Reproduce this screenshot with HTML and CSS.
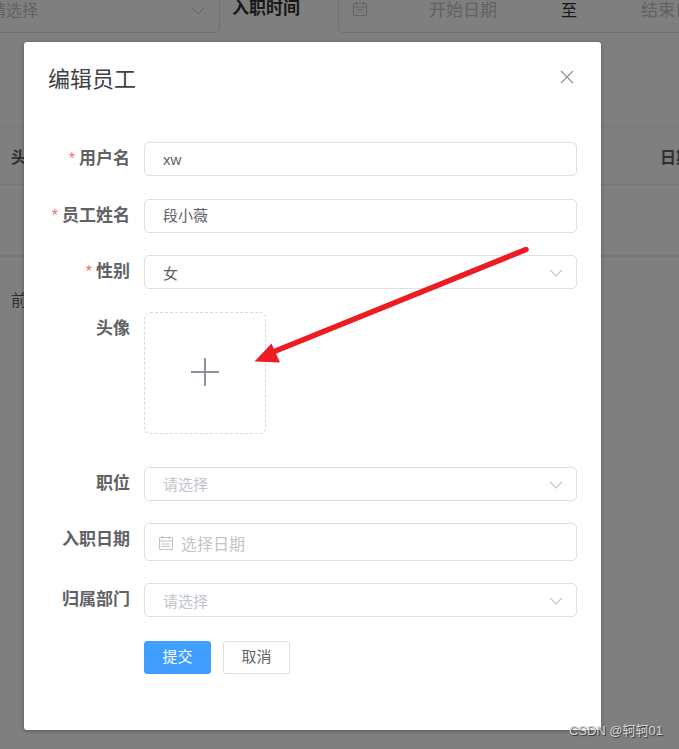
FILE: index.html
```html
<!DOCTYPE html>
<html lang="zh-CN">
<head>
  <meta charset="UTF-8">
  <title>编辑员工</title>
  <link rel="stylesheet" href="styles.css">
</head>
<body>
  <div class="page">
    <div class="filter-row">
      <div class="filter-select">
        <span class="filter-placeholder">请选择</span>
        <svg class="filter-chevron" width="14" height="8" viewBox="0 0 14 8"><path d="M1 1l6 6 6-6" fill="none" stroke="#c0c4cc" stroke-width="1"/></svg>
      </div>
      <div class="filter-label">入职时间</div>
      <div class="filter-range">
        <svg class="range-icon" width="16" height="16" viewBox="0 0 16 16"><path d="M1.5 2.5h13v12h-13zM1.5 6h13M4.5 1v3M11.5 1v3M4 8.5h2M7 8.5h2M10 8.5h2M4 11h2M7 11h2M10 11h2" fill="none" stroke="#c0c4cc" stroke-width="1"/></svg>
        <span class="range-start">开始日期</span>
        <span class="range-sep">至</span>
        <span class="range-end">结束日期</span>
      </div>
    </div>
    <div class="table-head">
      <span>头像</span>
      <span class="last-col">日期</span>
    </div>
    <div class="table-row"></div>
    <div class="page-note">前</div>
  </div>

  <div class="overlay"></div>

  <div class="dialog">
    <div class="dialog-head">
      <h2>编辑员工</h2>
      <svg class="close-icon" width="14" height="14" viewBox="0 0 14 14"><path d="M1 1l12 12M13 1L1 13" fill="none" stroke="#909399" stroke-width="1.3"/></svg>
    </div>
    <form class="form">
      <div class="form-row">
        <label class="required">用户名</label>
        <div class="field">xw</div>
      </div>
      <div class="form-row">
        <label class="required">员工姓名</label>
        <div class="field field-name">段小薇</div>
      </div>
      <div class="form-row">
        <label class="required">性别</label>
        <div class="field select">女
          <svg width="14" height="8" viewBox="0 0 14 8"><path d="M1 1l6 6 6-6" fill="none" stroke="#c0c4cc" stroke-width="1.1"/></svg>
        </div>
      </div>
      <div class="form-row upload-row">
        <label>头像</label>
        <div class="upload">
          <svg width="28" height="28" viewBox="0 0 28 28"><path d="M14 0v28M0 14h28" fill="none" stroke="#8c939d" stroke-width="2"/></svg>
        </div>
      </div>
      <div class="form-row">
        <label>职位</label>
        <div class="field select placeholder">请选择
          <svg width="14" height="8" viewBox="0 0 14 8"><path d="M1 1l6 6 6-6" fill="none" stroke="#c0c4cc" stroke-width="1.1"/></svg>
        </div>
      </div>
      <div class="form-row date-row">
        <label>入职日期</label>
        <div class="field date placeholder">
          <svg width="14" height="14" viewBox="0 0 14 14"><path d="M.5 1.5h13v12H.5zM.5 5h13M3.5 0v3M10.5 0v3M3 8h8M3 10.5h8" fill="none" stroke="#c0c4cc" stroke-width="1"/></svg>
          选择日期
        </div>
      </div>
      <div class="form-row">
        <label>归属部门</label>
        <div class="field select placeholder">请选择
          <svg width="14" height="8" viewBox="0 0 14 8"><path d="M1 1l6 6 6-6" fill="none" stroke="#c0c4cc" stroke-width="1.1"/></svg>
        </div>
      </div>
      <div class="form-actions">
        <button type="button" class="btn btn-primary">提交</button>
        <button type="button" class="btn">取消</button>
      </div>
    </form>
  </div>

  <svg class="arrow" width="679" height="749" viewBox="0 0 679 749">
    <path d="M526 249.5L268 354" fill="none" stroke="#ed1c24" stroke-width="5.5" stroke-linecap="round"/>
    <path d="M254.5 361.5L271.5 343.5L280 362.5z" fill="#ed1c24"/>
  </svg>

  <div class="watermark">CSDN @轲轲01</div>
</body>
</html>
```

FILE: styles.css
```css
html, body {
  margin: 0;
  padding: 0;
  height: 100%;
  overflow: hidden;
}

body {
  position: relative;
  width: 679px;
  height: 749px;
  font-family: "Liberation Sans", "Noto Sans CJK SC", sans-serif;
  background-color: #fff;
  color: #606266;
}

/* page behind the mask */
.page {
  margin-top: -15px;
}

.filter-row {
  display: flex;
  align-items: flex-start;
  height: 48px;
}

.filter-select {
  position: relative;
  box-sizing: border-box;
  flex: none;
  width: 240px;
  height: 48px;
  margin-left: -20px;
  padding-top: 14px;
  border: 1px solid #dcdfe6;
  border-radius: 5px;
  font-size: 16px;
  line-height: 22px;
  color: #c0c4cc;
}

.filter-placeholder {
  margin-left: 9px;
}

.filter-chevron {
  position: absolute;
  right: 14px;
  top: 21px;
}

.filter-label {
  flex: none;
  width: 106px;
  margin-left: 12px;
  padding-top: 13px;
  font-size: 17px;
  line-height: 22px;
  font-weight: bold;
  color: #303133;
}

.filter-range {
  display: flex;
  flex: none;
  box-sizing: border-box;
  width: 420px;
  height: 48px;
  padding-top: 14px;
  padding-left: 13px;
  border: 1px solid #dcdfe6;
  border-radius: 5px;
  font-size: 17px;
  line-height: 22px;
  color: #c0c4cc;
  white-space: nowrap;
}

.range-icon {
  flex: none;
  margin-top: 1px;
}

.range-start {
  margin-left: 61px;
}

.range-sep {
  margin-left: 64px;
  color: #303133;
  font-size: 16px;
}

.range-end {
  margin-left: 64px;
}

.table-head {
  display: flex;
  justify-content: space-between;
  align-items: center;
  box-sizing: border-box;
  height: 59px;
  margin-top: 93px;
  padding-left: 11px;
  border-top: 1px solid #ebeef5;
  border-bottom: 1px solid #ebeef5;
  font-size: 16px;
  font-weight: bold;
  color: #606266;
}

.last-col {
  width: 19px;
  white-space: nowrap;
}

.table-row {
  height: 70px;
  border-bottom: 2px solid #ebeef5;
}

.page-note {
  margin-top: 33px;
  padding-left: 11px;
  font-size: 16px;
  line-height: 22px;
}

.overlay {
  position: absolute;
  left: 0;
  top: 0;
  width: 100%;
  height: 100%;
  background-color: rgba(0, 0, 0, 0.5);
}

/* dialog */
.dialog {
  position: absolute;
  left: 24px;
  top: 42px;
  box-sizing: border-box;
  width: 577px;
  height: 688px;
  background-color: #fff;
  border-radius: 3px;
  box-shadow: 0 1px 4px rgba(0, 0, 0, 0.3);
}

.dialog-head {
  display: flex;
  justify-content: space-between;
  align-items: center;
  height: 76px;
  padding: 0 27px 0 24px;
}

.dialog-head h2 {
  margin: 0;
  font-size: 22px;
  line-height: 72px;
  font-weight: 400;
  color: #3f4144;
}

.close-icon {
  margin-top: -6px;
}

.form {
  padding: 24px 24px 0 0;
}

.form-row {
  display: flex;
  height: 34px;
  margin-bottom: 22.5px;
}

.form-row label {
  box-sizing: border-box;
  flex: none;
  width: 120px;
  padding-right: 14px;
  text-align: right;
  font-size: 17px;
  line-height: 34px;
  font-weight: bold;
  color: #606266;
}

.required::before {
  content: "*";
  margin-right: 4px;
  font-size: 16px;
  color: #f56c6c;
  font-weight: normal;
}

.field {
  position: relative;
  display: flex;
  align-items: center;
  box-sizing: border-box;
  flex: 1;
  padding-left: 18px;
  border: 1px solid #dcdfe6;
  border-radius: 5px;
  font-size: 15px;
  color: #606266;
}

.field-name {
  padding-bottom: 2px;
}

.field.select svg {
  position: absolute;
  right: 13px;
  top: 13px;
}

.field.placeholder {
  color: #c0c4cc;
}

.upload-row {
  height: 122px;
  margin-bottom: 33px;
}

.upload {
  display: flex;
  align-items: center;
  justify-content: center;
  box-sizing: border-box;
  width: 122px;
  height: 122px;
  padding-bottom: 1px;
  border: 1px dashed #d9d9d9;
  border-radius: 6px;
}

.date-row {
  height: 38px;
  margin-bottom: 22px;
}

.date-row label {
  line-height: 33px;
}

.field.date {
  padding-left: 14px;
  padding-top: 1px;
  font-size: 16px;
}

.field.date svg {
  margin-right: 8px;
}

.form-actions {
  display: flex;
  gap: 12px;
  margin-left: 120px;
  padding-top: 1px;
}

.btn {
  box-sizing: border-box;
  width: 67px;
  height: 33px;
  padding: 0 0 3px;
  border: 1px solid #dcdfe6;
  border-radius: 3px;
  background-color: #fff;
  font-family: inherit;
  font-size: 15px;
  color: #606266;
}

.btn-primary {
  border-color: #409eff;
  background-color: #409eff;
  color: #fff;
}

.arrow {
  position: absolute;
  left: 0;
  top: 0;
}

.watermark {
  position: absolute;
  right: 16px;
  bottom: 9px;
  font-size: 13px;
  line-height: 18px;
  color: #d8d8d8;
  text-shadow: 1px 1px 1px rgba(0, 0, 0, 0.6);
  white-space: nowrap;
}
```
